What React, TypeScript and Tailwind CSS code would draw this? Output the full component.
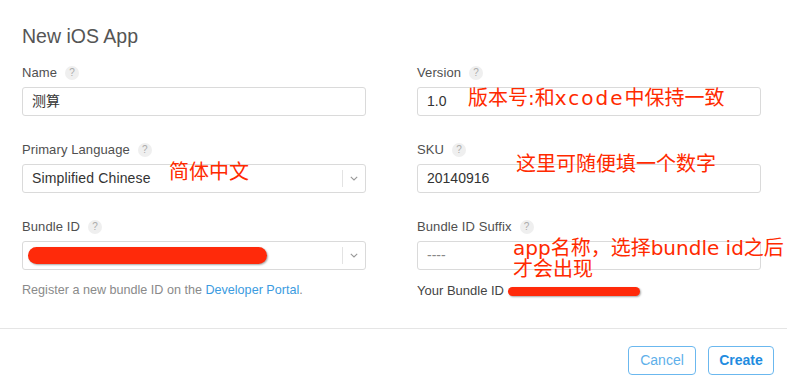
import React from "react";

const ui = "font-['Liberation_Sans','Noto_Sans_CJK_SC',sans-serif]";
const cjk = "font-['DejaVu_Sans','Noto_Sans_CJK_SC',sans-serif]";

function Help() {
  return (
    <span className="ml-[8px] inline-flex h-[14px] w-[14px] items-center justify-center rounded-full bg-[#efefef] text-[10px] leading-none text-[#ababab]">
      ?
    </span>
  );
}

function Label({ children }: { children: React.ReactNode }) {
  return (
    <div className="flex h-[16px] items-center text-[13px] leading-[16px] tracking-[0.1px] text-[#4f4f4f]">
      <span>{children}</span>
      <Help />
    </div>
  );
}

function Input({ value, muted }: { value: string; muted?: boolean }) {
  return (
    <div
      className={`mt-[6px] flex h-[29px] items-center rounded-[3px] border border-[#dadada] bg-white px-[9px] text-[14px] ${
        muted ? "text-[#888]" : "text-[#333]"
      }`}
    >
      {value}
    </div>
  );
}

function Select({ value }: { value: string }) {
  return (
    <div className="mt-[6px] flex h-[29px] items-center rounded-[3px] border border-[#dadada] bg-white pl-[9px] text-[14px] tracking-[0.15px] text-[#333]">
      <span className="flex-1">{value}</span>
      <span className="h-[17px] w-px bg-[#e3e3e3]" />
      <span className="flex w-[22px] items-center justify-center">
        <svg width="8" height="5" viewBox="0 0 8 5">
          <path d="M0.8 0.8 L4 4 L7.2 0.8" fill="none" stroke="#999" strokeWidth="1.1" />
        </svg>
      </span>
    </div>
  );
}

export default function App() {
  return (
    <div className={`relative h-[389px] w-[787px] overflow-hidden bg-white ${ui}`}>
      <div className="pl-[22px] pr-[26px]">
        <h1 className="pt-[24px] text-[19.5px] leading-[24px] text-[#555]">New iOS App</h1>

        <div className="mt-[17px] grid grid-cols-[344px_344px] gap-x-[51px] gap-y-[26px]">
          <div>
            <Label>Name</Label>
            <Input value="测算" />
          </div>
          <div>
            <Label>Version</Label>
            <Input value="1.0" />
          </div>
          <div>
            <Label>Primary Language</Label>
            <Select value="Simplified Chinese" />
          </div>
          <div>
            <Label>SKU</Label>
            <Input value="20140916" />
          </div>
          <div>
            <Label>Bundle ID</Label>
            <Select value="" />
            <div className="mt-[12px] text-[12.6px] leading-[16px] text-[#8a8a8a]">
              Register a new bundle ID on the <span className="text-[#3b9be0]">Developer Portal</span>.
            </div>
          </div>
          <div>
            <Label>Bundle ID Suffix</Label>
            <Input value="----" muted />
            <div className="mt-[13px] text-[13px] leading-[16px] text-[#444]">Your Bundle ID</div>
          </div>
        </div>
      </div>

      <div className="mt-[29px] h-px w-full bg-[#e5e5e5]" />

      <div className="mt-[17px] flex justify-end gap-[12px] pr-[13px]">
        <button className="h-[29px] w-[68px] rounded-[4px] border border-[#6bb8ef] text-[14px] text-[#5eb0ea]">
          Cancel
        </button>
        <button className="h-[29px] w-[66px] rounded-[4px] border border-[#6bb8ef] text-[14px] font-bold text-[#1f8ce0]">
          Create
        </button>
      </div>

      {/* red annotations overlay */}
      <div className={`pointer-events-none absolute left-[468px] top-[87px] whitespace-nowrap text-[20px] leading-[22px] text-[#ff2a00] ${cjk}`}>
        版本号:和<span className="tracking-[2px]">xcode</span>中保持一致
      </div>
      <div className={`pointer-events-none absolute left-[169px] top-[161px] whitespace-nowrap text-[20px] leading-[22px] text-[#ff2a00] ${cjk}`}>
        简体中文
      </div>
      <div className={`pointer-events-none absolute left-[516px] top-[153px] whitespace-nowrap text-[20px] leading-[22px] text-[#ff2a00] ${cjk}`}>
        这里可随便填一个数字
      </div>
      <div className={`pointer-events-none absolute left-[513px] top-[238px] whitespace-nowrap text-[20px] leading-[21px] text-[#ff2a00] ${cjk}`}>
        app名称，选择bundle id之后
        <br />
        才会出现
      </div>
      <div className="pointer-events-none absolute left-[28px] top-[247px] h-[17px] w-[239px] rounded-full bg-[#ff2a0a] shadow-[1px_1px_2px_rgba(0,0,0,0.35)]" />
      <div className="pointer-events-none absolute left-[508px] top-[287px] h-[9px] w-[132px] rounded-full bg-[#ff2a0a] shadow-[1px_1px_2px_rgba(0,0,0,0.35)]" />
    </div>
  );
}
